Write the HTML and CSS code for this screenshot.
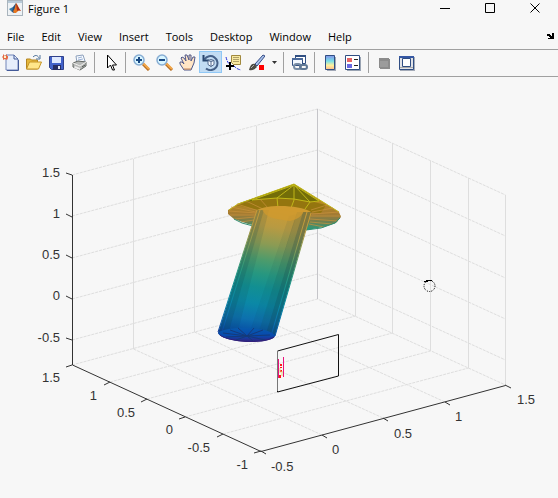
FILE: index.html
```html
<!DOCTYPE html>
<html lang="en">
<head>
<meta charset="utf-8">
<title>Figure 1</title>
<link rel="stylesheet" href="styles.css">
</head>
<body>
<div class="window">
  <header class="titlebar">
    <svg class="logo" viewBox="0 0 16 16" aria-hidden="true">
      <rect x=".5" y=".5" width="15" height="15" fill="#eef2f5" stroke="#a9b4bd"/>
      <path d="M1 1h14v2H1z" fill="#b9cbd9"/>
      <path d="M2 9l4-2 2 2-3 3z" fill="#367ca8"/>
      <path d="M6 7l3-4 0 7-2 3-2-1z" fill="#254f80"/>
      <path d="M9 3c2 2 3 6 5 8-2-1-3 0-5 2l-2 0-1-2c2-1 2-5 3-8z" fill="#e77920"/>
      <path d="M9 3c2 3 3 6 5 8-2-1-3-1-4 0z" fill="#aa2d1b"/>
    </svg>
    <h1 class="title">Figure 1</h1>
    <div class="window-controls">
      <button aria-label="Minimize"><svg viewBox="0 0 11 11"><path d="M0 5.500h10" /></svg></button>
      <button aria-label="Maximize"><svg viewBox="0 0 11 11"><path d="M.5.5h9v9h-9z"/></svg></button>
      <button aria-label="Close"><svg viewBox="0 0 11 11"><path d="M.5.5l9 9M9.500.5l-9 9"/></svg></button>
    </div>
  </header>
  <nav class="menubar">
    <button>File</button><button>Edit</button><button>View</button><button>Insert</button><button>Tools</button><button>Desktop</button><button>Window</button><button>Help</button>
    <button class="dock" aria-label="Dock figure"><svg viewBox="0 0 7 6" width="7" height="6"><path d="M0 1h3v1h1v1h1V0h2v6H1V5h2V4H2V3H0z"/></svg></button>
  </nav>
  <div class="toolbar" role="toolbar">
    <button aria-label="New figure"><svg viewBox="0 0 17 17"><path d="M4 1h8l4 4v11H4z" fill="#e7eefb" stroke="#7285b8"/><path d="M12 1v4h4M16.500 6v10.500H5" fill="none" stroke="#435a98"/><path d="M1 0l2 2 2-2v2h1v2l-1 2-2-1-2 1V4L0 3l1-1z" fill="#e66a44"/><path d="M2 2h2v2H2z" fill="#fff3c6"/></svg></button>
    <button aria-label="Open"><svg viewBox="0 0 17 17"><path d="M1.500 15V5h4l1 1h6v9z" fill="#e5b83c" stroke="#b48520"/><path d="M1.500 15l3-7h12l-3 7z" fill="#ffe68a" stroke="#c69526"/><path d="M8 3c3-3 5-1 6 1m1-3v4h-4" fill="none" stroke="#51749c"/></svg></button>
    <button aria-label="Save"><svg viewBox="0 0 17 17"><path d="M1.500 2.500h14v13h-12l-2-2z" fill="#4262c9" stroke="#30418b"/><path d="M4 3h9v6H4z" fill="#dfe9ff"/><path d="M5 11h8v5H5z" fill="#262d62"/><path d="M10 12h2v3h-2z" fill="#e4e7f2"/></svg></button>
    <button aria-label="Print"><svg viewBox="0 0 17 17"><path d="M5 2l7-1 2 6-8 2z" fill="#f7fbff" stroke="#8da0bc"/><path d="M7 4l4-1M7 6l5-1" stroke="#9ab0d4"/><path d="M2 9l5-2 8 1v4l-6 4-7-3z" fill="#b7b9b7" stroke="#636863"/><path d="M2 9l7 3 6-4" fill="none" stroke="#efefed"/><path d="M4 12l5 2v2l-6-2z" fill="#eee"/><path d="M11 13l3-2" stroke="#4c514d"/></svg></button>
    <span class="separator"></span>
    <button aria-label="Edit plot"><svg viewBox="0 0 17 17"><path d="M5.500 1v13l3-3 2 5h2l-2-5h4z" fill="#fff" stroke="#000"/></svg></button>
    <span class="separator"></span>
    <button aria-label="Zoom in"><svg viewBox="0 0 17 17"><path d="M10 10l6 6" stroke="#b76d22" stroke-width="3"/><path d="M10 9l6 6" stroke="#f2a84b" stroke-width="2"/><circle cx="6" cy="6" r="5" fill="#d8f5ff" stroke="#87add3" stroke-width="1.500"/><path d="M3 6h6M6 3v6" stroke="#194984" stroke-width="2"/></svg></button>
    <button aria-label="Zoom out"><svg viewBox="0 0 17 17"><path d="M10 10l6 6" stroke="#b76d22" stroke-width="3"/><path d="M10 9l6 6" stroke="#f2a84b" stroke-width="2"/><circle cx="6" cy="6" r="5" fill="#d8f5ff" stroke="#87add3" stroke-width="1.500"/><path d="M3 6h6" stroke="#194984" stroke-width="2"/></svg></button>
    <button aria-label="Pan"><svg viewBox="0 0 17 17"><path d="M5 16l-4-6 0-2 2 0 2 2-3-6 1-1 2 1 2 3-1-6 2 0 2 5 0-5 2 0 0 6 2-4 2 0-1 6-3 7z" fill="#ffe5c5" stroke="#4e5789"/><path d="M5 15h7" stroke="#c68454"/></svg></button>
    <button class="active" aria-label="Rotate 3D" aria-pressed="true"><svg viewBox="0 0 17 17"><path d="M2.500 5.500A7 7 0 1 1 4 14.500" fill="none" stroke="#445f87" stroke-width="2"/><path d="M1.500 1v5.500H7" fill="none" stroke="#29466f" stroke-width="2"/><path d="M6 6.500l3-1 3 1v4l-3 2-3-2zm0 0l3 1 3-1M9 7.500v5" fill="#f4f9ff" stroke="#52688c"/></svg></button>
    <button aria-label="Data cursor"><svg viewBox="0 0 17 17"><path d="M1 3c1 4 2 6 4 8m4 1c2 2 3 3 7 4" fill="none" stroke="#2532dc" stroke-dasharray="3 1"/><path d="M6.500 1.500h9v9h-7l-2-2z" fill="#f8e9a0" stroke="#a1893e"/><path d="M8 3.500h6M8 5.500h6M8 7.500h6" stroke="#b0a068"/><path d="M1 12h8M5 8v8" stroke="#000" stroke-width="2"/></svg></button>
    <button aria-label="Brush data"><svg viewBox="0 0 17 17"><path d="M7 10l8-9 2 1-8 10z" fill="#aac3eb" stroke="#354b85"/><path d="M1 16c1-3 2-7 6-6l2 3c-2 2-4 4-8 3z" fill="#4c4b43"/><path d="M3 14l3-3" stroke="#aaa"/><path d="M11 11h5v5h-5z" fill="#f00"/></svg></button>
    <button class="more" aria-label="Brush options"><svg viewBox="0 0 5 3"><path d="M0 0h5L2.500 3z" fill="#333"/></svg></button>
    <span class="separator"></span>
    <button aria-label="Link plot"><svg viewBox="0 0 17 17"><path d="M4.500 1.500h10v8h-10z" fill="#fff" stroke="#304f82"/><path d="M4 2h11" stroke="#304f82" stroke-width="2"/><path d="M1.500 4.500h10v7h-10z" fill="#f2f8ff" stroke="#304f82"/><path d="M1 5h11" stroke="#49689a" stroke-width="2"/><rect x="3" y="10" width="7" height="5" rx="2.500" fill="none" stroke="#788da6" stroke-width="2"/><rect x="9" y="11" width="7" height="4" rx="2" fill="none" stroke="#5f7895" stroke-width="2"/></svg></button>
    <span class="separator"></span>
    <button aria-label="Insert colorbar"><svg viewBox="0 0 17 17"><defs><linearGradient id="bar" x2="0" y2="1"><stop stop-color="#8593e8"/><stop offset=".4" stop-color="#77dfe8"/><stop offset=".7" stop-color="#fff19c"/><stop offset="1" stop-color="#ffbc8d"/></linearGradient></defs><path d="M5 3h9v14H5z" fill="#a1a8b6"/><path d="M3.500 1.500h9v14h-9z" fill="url(#bar)" stroke="#304e83"/></svg></button>
    <button aria-label="Insert legend"><svg viewBox="0 0 17 17"><path d="M2 3h14v14H2z" fill="#9aa4b3"/><path d="M.5 1.500h14v14H.5z" fill="#fff" stroke="#304e83"/><path d="M2 4h5v4H2z" fill="#e66565"/><path d="M2 10h5v4H2z" fill="#6868e3"/><path d="M9 5.500h4M9 11.500h4" stroke="#222"/></svg></button>
    <span class="separator"></span>
    <button aria-label="Hide plot tools"><svg viewBox="0 0 17 17"><path d="M3 4h10v1h1v10H4v-1H3z" fill="#8c8c8c"/><path d="M4 7h8v6H4z" fill="#9c9c9c"/></svg></button>
    <button aria-label="Show plot tools"><svg viewBox="0 0 17 17"><path d="M1 3h15v14H1z" fill="#a4abb8"/><path d="M.5 2.500h14v13H.5z" fill="#e1e3e8" stroke="#304e83"/><path d="M0 3h15" stroke="#3658a4" stroke-width="2"/><path d="M3.500 4.500h8v8h-8z" fill="#fff" stroke="#304e83"/><path d="M1 13.500h13" stroke="#aaa"/></svg></button>
  </div>
  <main class="plot">
    <svg viewBox="0 77 558 421" role="img" aria-label="Arrow surface in three-dimensional axes">
      <defs>
        <linearGradient id="shaft" gradientUnits="userSpaceOnUse" x1="280" y1="207" x2="258" y2="343">
          <stop stop-color="#cf9b31"/><stop offset=".15" stop-color="#b89a42"/><stop offset=".28" stop-color="#8b9b54"/><stop offset=".4" stop-color="#4c9b6c"/><stop offset=".5" stop-color="#279780"/><stop offset=".6" stop-color="#128f92"/><stop offset=".72" stop-color="#0b88a6"/><stop offset=".84" stop-color="#0d70ae"/><stop offset=".93" stop-color="#0750a5"/><stop offset="1" stop-color="#24258a"/>
        </linearGradient>
        <linearGradient id="rim" gradientUnits="userSpaceOnUse" x1="0" y1="202" x2="0" y2="231">
          <stop stop-color="#b68a20"/><stop offset=".42" stop-color="#a57b32"/><stop offset=".65" stop-color="#777e4b"/><stop offset="1" stop-color="#179f86"/>
        </linearGradient>
        <linearGradient id="cap" x2="0" y2="1"><stop stop-color="#0759ac"/><stop offset=".55" stop-color="#0849ad"/><stop offset="1" stop-color="#352080"/></linearGradient>
      </defs>
      <g class="grid">
        <path d="M72 175L317.500 109 505.500 195M72 216L317.500 150 505.500 236M72 258L317.500 192 505.500 278M72 299L317.500 233 505.500 319M72 340L317.500 274 505.500 360M72 365L317.500 299 505.500 385"/>
        <path d="M110 382L355.500 316M147 399L392.500 333M185 417L430.500 351M223 434L468.500 368M133.500 349L322 435M194.500 332L383 418M256.500 316L445 402"/>
      </g>
      <path class="grid-vertical" d="M133.500 159v190M194.500 142v190M256.500 126v190M355.500 126v190M392.500 143v190M430.500 161v190M468.500 178v190M505.500 195v190"/>
      <path class="back-edge" d="M317.500 109v190"/>
      <path class="axis" d="M72.500 175v190L261 451.500 505.500 385.500M66 173l6 2M66 214l6 3M66 255l6 3M66 296l6 3M66 338l6 2M72 365l-6 2M110 382l-6 3M147 399l-6 3M185 417l-6 2M223 434l-6 3M261 451l-7 2M261 451l5 3M322 435l5 3M383 418l5 3M445 402l5 3M505 385l6 3"/>
      <g class="tick-label">
        <text x="60" y="177" text-anchor="end">1.5</text><text x="60" y="218" text-anchor="end">1</text><text x="60" y="259" text-anchor="end">0.5</text><text x="60" y="300" text-anchor="end">0</text><text x="60" y="342" text-anchor="end">-0.5</text>
        <text x="60" y="382" text-anchor="end">1.5</text><text x="97" y="400" text-anchor="end">1</text><text x="135" y="417" text-anchor="end">0.5</text><text x="173" y="434" text-anchor="end">0</text><text x="210" y="452" text-anchor="end">-0.5</text><text x="248" y="469" text-anchor="end">-1</text>
        <text x="271" y="471">-0.5</text><text x="332" y="454">0</text><text x="394" y="438">0.5</text><text x="455" y="421">1</text><text x="517" y="404">1.5</text>
      </g>
      <path d="M228 210L238 204 294 184 320 200 339 212 341 217 336 223 324 227 307 230 262 227 248 224 234 219 228 214z" fill="url(#rim)"/>
      <path d="M237 204L260 196 294 184 319 201 310 203 294 200 277 198 259 200z" fill="#736d09"/>
      <path d="M236 205l24-6 17-1 17 1 16 2 16 4-5 8-63-3z" fill="#94750f"/>
      <path d="M252 200L294 185 277 198l1 10M294 185v15l-3 8M294 185l16 17-5 7M294 185l25 16M252 200l25-2 17 1 16 3 9-1M229 210l9-6 56-20 45 28" fill="none" stroke="#c0b618"/>
      <path d="M237 204l22 7M246 201l17 8M260 199l8 9M231 207l25 5M229 211l27 2M230 215l25 0M234 219l21-2M241 222l13-2M327 205l-16 5M333 208l-21 4M339 212l-27 2M341 216l-30 0M338 221l-28-2M332 224l-22-2M324 227l-15-3" fill="none" stroke="#c9923c" stroke-opacity=".7"/>
      <path d="M234 219l8 4 11 3M306 230l15-2 14-5 5-5" fill="none" stroke="#328e70"/>
      <path d="M257 210C269 204 299 205 311 212L275 336C271 344 222 343 218 333z" fill="url(#shaft)"/>
      <g fill="#103f48">
        <path d="M257 210l7 0L228 334l-10-1z" opacity=".28"/>
        <path d="M264 210l5 0L237 335l-9-1z" opacity=".12"/>
        <path d="M303 212l8 0L275 336l-10 1z" opacity=".38"/>
        <path d="M297 212l6 0L265 337l-8 0z" opacity=".2"/>
        <path d="M289 216l8-2L257 336l-9 1z" opacity=".07"/>
      </g>
      <path d="M257 210L218 332M260 210L222 332M311 213L275 336M307 212L271 336" fill="none" stroke="url(#shaft)"/>
      <path d="M262 209c8-4 35-3 42 2-3 6-6 8-14 10-14-2-25-3-28-12z" fill="#d09a2e" opacity=".75"/>
      <path d="M218 333c4-6 52-8 57 3-4 9-50 8-57-3z" fill="url(#cap)"/>
      <path d="M223 333l24 3 23-1M230 330l17 6 16-6M238 328l9 8 7-8M226 337l21-1 18 4M236 340l11-4 6 5" fill="none" stroke="#153a79"/>
      <path d="M220 335c8 7 44 9 54 2" fill="none" stroke="#322179"/>
      <path d="M277.500 351L338.500 334.500V376L277.500 392z" fill="none" stroke="#111"/>
      <path d="M277.500 351v40" stroke="#777"/>
      <path d="M278.500 359v19M283.500 357v20" stroke="#e9127c"/>
      <path d="M281 364v2M281 367v1M281 370v2M280 375v3" stroke="#ff1717" stroke-width="2"/>
      <path d="M280 368v5M282 371v5" stroke="#e8d97b"/>
      <circle cx="429.500" cy="286" r="5.500" fill="none" stroke="#000" stroke-dasharray="1 1"/>
      <path d="M424 281h2v-1h6v1h-4v1h-4z"/>
    </svg>
  </main>
</div>
</body>
</html>
```
FILE: styles.css
```css
* { box-sizing: border-box; }

body {
  margin: 0;
  background: #f7f7f7;
  color: #000;
  font-family: "Open Sans", "Noto Sans", sans-serif;
  font-size: 11px;
}

button {
  margin: 0;
  padding: 0;
  border: 0;
  background: none;
  color: inherit;
  font: inherit;
}

.window {
  display: flex;
  flex-direction: column;
  min-height: 100vh;
}

.titlebar {
  display: flex;
  align-items: center;
  height: 27px;
  padding: 0 0 11px 7px;
}

.logo {
  width: 16px;
  height: 16px;
}

.title {
  margin: 0 0 0 5px;
  font-size: 11px;
  font-weight: 400;
}

.window-controls {
  display: flex;
  margin-left: auto;
}

.window-controls button {
  display: flex;
  align-items: center;
  justify-content: center;
  width: 45px;
}

.window-controls svg {
  width: 11px;
  height: 11px;
  fill: none;
  stroke: #000;
}

.menubar {
  display: flex;
  align-items: center;
  gap: 17px;
  height: 22px;
  padding: 0 4px 4px 7px;
}

.dock {
  display: flex;
  margin-left: auto;
}

.toolbar {
  display: flex;
  align-items: center;
  height: 28px;
  padding-bottom: 2px;
  border: solid #a0a0a0;
  border-width: 1px 0;
}

.toolbar button {
  display: flex;
  flex: none;
  align-items: center;
  justify-content: center;
  width: 23px;
  height: 22px;
  border: 1px solid transparent;
}

.toolbar button:first-child {
  margin-left: -1px;
}

.toolbar button svg {
  flex: none;
  width: 17px;
  height: 17px;
}

.toolbar .active {
  border-color: #90c8f6;
  background: #c2dcf3;
}

.toolbar .more {
  width: 12px;
}

.toolbar .more svg {
  width: 5px;
  height: 3px;
}

.separator {
  width: 1px;
  height: 21px;
  margin: 0 4px 0 3px;
  background: #a0a0a0;
}

.plot svg {
  display: block;
  width: 100%;
}

.grid,
.grid-vertical,
.back-edge {
  fill: none;
  stroke: #dedede;
}

.grid {
  stroke-dasharray: 3 1;
}

.back-edge {
  stroke: #c5c5c9;
}

.axis {
  fill: none;
  stroke: #333;
}

.tick-label {
  fill: #333;
  font-family: "Liberation Sans", sans-serif;
  font-size: 13px;
}
```
